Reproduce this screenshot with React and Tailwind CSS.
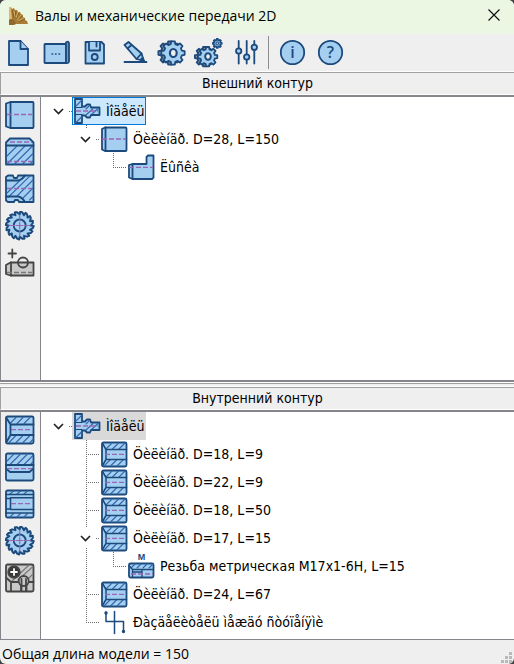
import React, { useState } from 'react';

const BLUE = '#1c4a7c';
const FILL = '#a5cff1';
const PURPLE = '#9868b4';

// Geometry helpers
const gearPath = (cx, cy, outer, inner, teeth) => {
    const step = (Math.PI * 2) / teeth;
    const at = (r, a) => `${(cx + r * Math.cos(a)).toFixed(2)} ${(cy + r * Math.sin(a)).toFixed(2)}`;
    let d = '';
    for (let i = 0; i < teeth; i++) {
        const a = i * step - Math.PI / 2;
        d += `${i ? 'L' : 'M'}${at(inner, a - step * 0.32)}L${at(outer, a - step * 0.2)}L${at(outer, a + step * 0.2)}L${at(inner, a + step * 0.32)}`;
    }
    return d + 'Z';
};

const sawPath = (cx, cy, outer, inner, teeth) => {
    const step = (Math.PI * 2) / teeth;
    const at = (r, a) => `${(cx + r * Math.cos(a)).toFixed(2)} ${(cy + r * Math.sin(a)).toFixed(2)}`;
    let d = '';
    for (let i = 0; i < teeth; i++) {
        const a = i * step - Math.PI / 2;
        d += `${i ? 'L' : 'M'}${at(inner, a)}L${at(outer, a + step * 0.1)}L${at(outer - 0.6, a + step * 0.5)}`;
    }
    return d + 'Z';
};

const Draw = ({ size, children, stroke = BLUE, fill = FILL }) => (
    <svg
        width={size}
        height={size}
        viewBox={`0 0 ${size} ${size}`}
        fill={fill}
        stroke={stroke}
        strokeWidth="1.8"
        strokeLinejoin="round"
        strokeLinecap="round"
        className="shrink-0"
        aria-hidden="true"
    >
        {children}
    </svg>
);

const Axis = ({ y, from = 2, to = 27, color = PURPLE }) => (
    <path d={`M${from} ${y}H${to}`} stroke={color} strokeWidth="1.3" strokeDasharray="5 2" strokeLinecap="butt" />
);

const Hatch = ({ d, color = '#2f68ae' }) => <path d={d} fill="none" stroke={color} strokeWidth="1.1" />;

// Toolbar icons
const NewIcon = () => (
    <Draw size={38}>
        <path d="M9 7H20.5L28 15V31H9Z" />
        <path d="M20.5 7V15H28" />
    </Draw>
);

const OpenIcon = () => (
    <Draw size={38}>
        <path d="M7 10H28V29H7Q6.500 29 6.500 28.500V10.500Z" />
        <path d="M28 8.500Q31 6.500 31 9.500V27Q31 29.500 28 29Z" fill="#6d9cc9" />
        <path d="M14 20h.6M17.500 20h.6M21 20h.6" strokeWidth="1.500" />
    </Draw>
);

const SaveIcon = () => (
    <Draw size={38}>
        <path d="M9.500 8H25.500L28 10.500V29.500H9.500Z" />
        <path d="M13 8V16.500H24V8" />
        <path d="M20.500 8.500V12.500" />
        <circle cx="18.700" cy="23" r="3" />
    </Draw>
);

const EditIcon = () => (
    <Draw size={38}>
        <path d="M10.500 11L14.500 8L27.500 19.500L30 27L22.500 25Z" />
        <path d="M13.500 14.500L17.500 11M22.500 25L27.500 19.500" />
        <path d="M27.500 24.500L30 27L27 26.300Z" fill={BLUE} />
        <path d="M10.500 28H32.500" />
    </Draw>
);

const GearIcon = () => (
    <Draw size={38}>
        <path d={gearPath(18, 19, 11.8, 9.2, 8)} fill="#8b8d92" />
        <path d={gearPath(21, 19, 11.8, 9.2, 8)} />
        <ellipse cx="21.300" cy="19" rx="3.400" ry="4" fill="#efefef" strokeWidth="2.200" />
    </Draw>
);

const GearsIcon = () => (
    <Draw size={38}>
        <path d={gearPath(14.6, 22.7, 9.8, 7.5, 8)} fill="#8b8d92" />
        <path d={gearPath(17.6, 22.7, 9.8, 7.5, 8)} />
        <ellipse cx="18" cy="22.500" rx="2.800" ry="3.300" fill="#efefef" strokeWidth="2" />
        <path d={gearPath(27.3, 9.4, 4.6, 3.4, 8)} fill="#7ca9d6" strokeWidth="1.500" />
        <circle cx="27.300" cy="9.400" r="1.300" strokeWidth="1" />
    </Draw>
);

const SlidersIcon = () => (
    <Draw size={38}>
        <path d="M10.700 7V29.500M18.700 7V29.500M26.300 7V29.500" />
        <circle cx="10.700" cy="17" r="2.700" />
        <circle cx="18.700" cy="23" r="2.700" />
        <circle cx="26.300" cy="13.300" r="2.700" />
    </Draw>
);

const RoundIcon = ({ sign }) => (
    <Draw size={38}>
        <circle cx="19.500" cy="18.500" r="11.700" />
        <text
            x="19.500"
            y="24"
            textAnchor="middle"
            fontFamily="Open Sans, sans-serif"
            fontSize="16"
            fontWeight="600"
            fill={BLUE}
            stroke="none"
        >
            {sign}
        </text>
    </Draw>
);

// Element icons of the side palettes
const CylinderIcon = () => (
    <Draw size={30}>
        <path d="M5.500 2H27.500Q28.500 2 28.500 3V27Q28.500 28 27.500 28H5.500L1 26.500V3.500Z" />
        <path d="M5.500 2V28" />
        <Axis y={14.5} />
    </Draw>
);

const OuterChamferIcon = () => (
    <Draw size={30}>
        <path d="M5 1.500H24.500L28.500 5.500V27.500H1V5.500Z" />
        <Hatch d="M2 19L12 9M2 27L20 9M9.500 27L27.500 9M17.500 27L28 16.500M25 27L28 24" />
        <path d="M1 8.500H28.500" fill="none" />
        <Axis y={5} from={5} />
        <Axis y={24.5} />
    </Draw>
);

const GrooveIcon = () => (
    <Draw size={30}>
        <path d="M1 3L3 1.500H8L9 4H12L13 1.500H28.500V28H22L20 28H14L13 26H10L9 28H3L1 26.500Z" />
        <Hatch d="M2 19L18.500 3M3 23.500L25 1.800M12 22L28 6M18 24L28 14M24.500 26L28 22.500" />
        <path d="M1 6.500H13Q17 6 20 1.500M1 22.500H13Q17 23 20 28" fill="none" />
        <Axis y={14.5} />
    </Draw>
);

const SawGearIcon = () => (
    <Draw size={30}>
        <path d={sawPath(14.7, 14.5, 14, 11.2, 16)} strokeWidth="2" />
        <circle cx="14.700" cy="14.500" r="6" />
        <path d="M4 14.500H25.500M14.700 4V25" stroke={PURPLE} strokeWidth="1.200" strokeDasharray="6 1.500" />
    </Draw>
);

const AddHoleIcon = () => (
    <Draw size={30} stroke="#454545" fill="#c9c9c9">
        <path d="M3.500 5.500H11M7.300 1.500V9.500" />
        <path d="M5.500 14.500H28.500V27.500H5.500L1 26V17Z" />
        <path d="M6 14.500V27.500" />
        <circle cx="18" cy="14.500" r="5" fill="none" />
        <Axis y={24.5} color="#777777" />
    </Draw>
);

const BoreIcon = () => (
    <Draw size={30}>
        <rect x="1" y="1.500" width="27.500" height="27" rx="1.500" />
        <Hatch d="M5 8.500L11 2.500M12 8.500L18 2.500M19 8.500L25 2.500M4 27.500L10.500 21M11 27.500L17.500 21M18 27.500L24.500 21M25 27.500L28 24.500" />
        <path d="M1.500 3L5.500 9.500V20L1.500 27M5.500 9.500H28.500M5.500 20H28.500" fill="none" />
        <Axis y={14.7} from={6} />
    </Draw>
);

const InnerChamferIcon = () => (
    <Draw size={30}>
        <rect x="1" y="1.500" width="27.500" height="27" rx="1.500" />
        <Hatch d="M2 9L9 2M5 12.500L15.500 2M12 12.500L22.500 2M19 12.500L28 3.500M25.500 12.500L28 10" />
        <path d="M1 13H28.500M1.500 17L5 20H24.500L28 17" fill="none" />
        <Axis y={16.7} />
    </Draw>
);

const InnerGrooveIcon = () => (
    <Draw size={30}>
        <rect x="1" y="1.500" width="27.500" height="27" rx="1.500" />
        <Hatch d="M5 5L8.500 2M12 5L15.500 2M19 5L22.500 2M5 28L8.500 24.500M12 28L15.500 24.500M19 28L22.500 24.500" />
        <path d="M1 5.500H28.500M1 24H28.500M28.500 8.800H5.500V20.500H28.500M1.500 9.500H5.500M1.500 20H5.500" fill="none" strokeWidth="1.500" />
        <Axis y={14.7} from={6} />
    </Draw>
);

const AddInnerHoleIcon = () => (
    <Draw size={30} stroke="#454545" fill="#c9c9c9">
        <rect x="1" y="1.500" width="27.500" height="27" rx="1.500" />
        <Hatch color="#777777" d="M6 19L24 2M13 17L28 3.500M22 17L28 11" />
        <path d="M1.500 15L6 19H28.500M6 19V28M16 18V28M21.500 18V28" fill="none" />
        <circle cx="18.700" cy="18" r="5" />
        <path d="M16.500 16V28M21 16V28" fill="none" />
        <circle cx="9" cy="9" r="5.800" fill="#383838" />
        <path d="M6 9H12M9 6V12" stroke="#ffffff" />
    </Draw>
);

// Tree icons
const ShaftIcon = () => (
    <Draw size={28}>
        <path d="M2 2H9V9.500H12L14 7.500H17L18 10.500H26.500V18H18L17 20.500H14L12 18.500H9V26H2Z" />
        <Hatch d="M3 9L8.500 3.500M3 25.500L8.500 20M13 12L16 9M13 18L20 11.500M19 17L25 11.500" />
        <path d="M2 10.500H9M2 17.500H9" fill="none" strokeWidth="1.200" />
        <Axis y={14} from={3} to={25} />
    </Draw>
);

const TreeCylinderIcon = () => (
    <Draw size={28}>
        <path d="M5 2.500H25.500Q26.500 2.500 26.500 3.500V25Q26.500 26 25.500 26H5L2 24.500V4Z" />
        <path d="M5.500 2.500V26" />
        <Axis y={14} to={26} />
    </Draw>
);

const FlatIcon = () => (
    <Draw size={28}>
        <path d="M5.500 11H19.500V4L21 2.500H26.500V24.500L25 26H5.500L2 24.500V12Z" />
        <path d="M5.500 11V26" />
        <Axis y={14.3} to={26} />
    </Draw>
);

const TreeBoreIcon = () => (
    <Draw size={28}>
        <rect x="2" y="2.500" width="24.500" height="24" rx="1.500" />
        <Hatch d="M6 9L12 3M12.500 9L18.500 3M19 9L25 3M4 26L10.500 19.500M10.500 26L17 19.500M17 26L23.500 19.500" />
        <path d="M2.500 3.500L6 9.500V19.500L2.500 25.500M6 9.500H26.500M6 19.500H26.500" fill="none" strokeWidth="1.500" />
        <Axis y={14.3} from={5} to={26} />
    </Draw>
);

const ThreadIcon = () => (
    <Draw size={28}>
        <text
            x="14.500"
            y="8"
            textAnchor="middle"
            fontFamily="Liberation Sans, sans-serif"
            fontSize="9"
            fontWeight="700"
            fill={BLUE}
            stroke="none"
        >
            M
        </text>
        <rect x="2" y="11.500" width="24.500" height="14" rx="1.500" />
        <Hatch d="M4 16L8 12M10 16L14 12M16 16L20 12M22 16L26 12" />
        <path d="M2.500 14L5.500 17.500H26.500M5.500 17.500V25M15 17.500V25M5.500 20H15" fill="none" strokeWidth="1.300" />
        <Axis y={22} from={4} to={26} />
    </Draw>
);

const SeparatorIcon = () => (
    <Draw size={28} fill="none">
        <path d="M6 4V13.500H23.500V24M14.500 3.500V25.500" strokeWidth="1.500" />
        <circle cx="6" cy="5" r="0.800" />
        <circle cx="23.500" cy="23.500" r="0.800" />
    </Draw>
);

const AppIcon = () => (
    <svg width="20" height="20" viewBox="0 0 20 20" className="shrink-0" aria-hidden="true">
        <path d="M1 0L3 0L4 2L6 1L7 3L9 3L10 5L12 5L13 7L15 8L15 10L17 11L17 13L19 14L20 17H8L5 18H1Z" fill="#a97d35" />
        <path d="M1 0L3 0L4 12L1 13Z" fill="#d9b878" />
        <path d="M4 3L6 11M8 4L7 11M11 6L8 12M14 9L9 13M17 12L10 15" stroke="#805721" strokeWidth="0.900" />
        <path d="M6 4L7 10M10 5L8 11M13 8L9 13M16 11L10 14" stroke="#d6b26c" strokeWidth="0.900" />
        <path d="M1 13Q6 10 8 17L5 18H1Z" fill="#8f682c" />
    </svg>
);

const TOOLS = [
    { name: 'Новая модель', icon: NewIcon },
    { name: 'Открыть', icon: OpenIcon },
    { name: 'Сохранить', icon: SaveIcon },
    { name: 'Построить', icon: EditIcon },
    { name: 'Генерация', icon: GearIcon },
    { name: 'Механические передачи', icon: GearsIcon },
    { name: 'Параметры', icon: SlidersIcon },
];

const OUTER_PALETTE = [
    { name: 'Цилиндр', icon: CylinderIcon },
    { name: 'Фаска', icon: OuterChamferIcon },
    { name: 'Канавка', icon: GrooveIcon },
    { name: 'Передача', icon: SawGearIcon },
    { name: 'Добавить отверстие', icon: AddHoleIcon },
];

const INNER_PALETTE = [
    { name: 'Цилиндр', icon: BoreIcon },
    { name: 'Фаска', icon: InnerChamferIcon },
    { name: 'Канавка', icon: InnerGrooveIcon },
    { name: 'Передача', icon: SawGearIcon },
    { name: 'Добавить отверстие', icon: AddInnerHoleIcon },
];

const OUTER_TREE = {
    label: 'Ìîäåëü',
    icon: ShaftIcon,
    children: [
        {
            label: 'Öèëèíäð. D=28, L=150',
            icon: TreeCylinderIcon,
            children: [{ label: 'Ëûñêà', icon: FlatIcon }],
        },
    ],
};

const INNER_TREE = {
    label: 'Ìîäåëü',
    icon: ShaftIcon,
    children: [
        { label: 'Öèëèíäð. D=18, L=9', icon: TreeBoreIcon },
        { label: 'Öèëèíäð. D=22, L=9', icon: TreeBoreIcon },
        { label: 'Öèëèíäð. D=18, L=50', icon: TreeBoreIcon },
        {
            label: 'Öèëèíäð. D=17, L=15',
            icon: TreeBoreIcon,
            children: [{ label: 'Резьба метрическая М17х1-6Н, L=15', icon: ThreadIcon }],
        },
        { label: 'Öèëèíäð. D=24, L=67', icon: TreeBoreIcon },
        { label: 'Ðàçäåëèòåëü ìåæäó ñòóïåíÿìè', icon: SeparatorIcon },
    ],
};

// Dotted connector between a row and its parent
const Guide = ({ d }) => (
    <svg width="27" height="28" viewBox="0 0 27 28" className="shrink-0" fill="none" aria-hidden="true">
        {d && <path d={d} stroke="#6e6e6e" strokeDasharray="1 1" />}
    </svg>
);

const TreeNode = ({ node, lines = [], root, last = true, highlight }) => {
    const [open, setOpen] = useState(true);
    const Icon = node.icon;

    let link = last ? 'M14.5 0V14M14 14.5H27' : 'M14.5 0V28M14 14.5H27';
    if (node.children) {
        link = root ? 'M24 14.5H27' : `M14.5 0V4M24 14.5H27${last ? '' : 'M14.5 24V28'}`;
    }

    return (
        <li>
            <div className="flex h-7">
                {lines.map((on, i) => <Guide key={i} d={on ? 'M14.5 0V28' : ''} />)}
                {node.children ? (
                    <button
                        type="button"
                        aria-label={open ? 'Свернуть' : 'Развернуть'}
                        onClick={() => setOpen(!open)}
                        className="relative shrink-0"
                    >
                        <Guide d={link} />
                        <svg
                            width="11"
                            height="7"
                            viewBox="0 0 11 7"
                            fill="none"
                            stroke="#1f1f1f"
                            strokeWidth="1.600"
                            className={`absolute left-2 top-[11px] ${open ? '' : '-rotate-90'}`}
                        >
                            <path d="M1 1L5.500 5.500L10 1" />
                        </svg>
                    </button>
                ) : <Guide d={link} />}
                <div className={`flex items-center gap-[5px] border pr-px ${highlight || 'border-transparent'}`}>
                    <Icon />
                    <span className="whitespace-nowrap">{node.label}</span>
                </div>
            </div>
            {node.children && open && (
                <ul>
                    {node.children.map((child, i) => (
                        <TreeNode
                            key={child.label}
                            node={child}
                            last={i === node.children.length - 1}
                            lines={root ? [false] : [...lines, !last]}
                        />
                    ))}
                </ul>
            )}
        </li>
    );
};

const Contour = ({ title, palette, tree, highlight, className }) => (
    <section className={`flex flex-col font-['DejaVu_Sans_Condensed','DejaVu_Sans',sans-serif] text-sm ${className}`}>
        <h2 className="h-[23px] shrink-0 border-b border-l border-t border-b-white border-l-[#a0a0a0] border-t-[#a0a0a0] text-center leading-5">
            {title}
        </h2>
        <div className="flex flex-1 border-l border-t-2 border-[#85858b]">
            <div className="flex w-10 shrink-0 flex-col gap-[7px] border-r border-[#85858b] pl-1 pt-[3px]">
                {palette.map(({ name, icon: Icon }) => (
                    <button key={name} type="button" title={name} className="size-[30px]">
                        <Icon />
                    </button>
                ))}
            </div>
            <ul className="flex-1 overflow-hidden bg-white pb-[3px] pl-1">
                <TreeNode node={tree} root highlight={highlight} />
            </ul>
        </div>
    </section>
);

export default function App() {
    return (
        <div className="min-h-screen bg-[#444444] font-['Open_Sans','Noto_Sans',sans-serif] text-black">
            <div className="flex min-h-screen flex-col overflow-hidden rounded-md bg-[#efefef]">
                <header className="flex h-[34px] shrink-0 items-center bg-[#ebf7e3] pl-2 pr-[14px]">
                    <AppIcon />
                    <h1 className="flex-1 pb-0.5 pl-[7px] text-sm">
                        Валы и механические передачи 2D
                    </h1>
                    <button type="button" aria-label="Закрыть" className="pb-1">
                        <svg width="12" height="12" viewBox="0 0 12 12" stroke="#111111" strokeWidth="1.200">
                            <path d="M0.500 0.500L11.500 11.500M11.500 0.500L0.500 11.500" />
                        </svg>
                    </button>
                </header>

                <nav className="flex h-[38px] shrink-0 border-b border-white">
                    {TOOLS.map(({ name, icon: Icon }) => (
                        <button key={name} type="button" title={name} className="w-[38px]">
                            <Icon />
                        </button>
                    ))}
                    <div className="my-0.5 ml-0.5 mr-1 w-px bg-[#8c8c8c]" />
                    <button type="button" title="О программе" className="w-[38px]">
                        <RoundIcon sign="i" />
                    </button>
                    <button type="button" title="Справка" className="w-[38px]">
                        <RoundIcon sign="?" />
                    </button>
                </nav>

                <Contour
                    title="Внешний контур"
                    palette={OUTER_PALETTE}
                    tree={OUTER_TREE}
                    highlight="border-[#0078d7] bg-[#cce8ff]"
                    className="flex-1"
                />
                <div className="h-[7px] shrink-0 border-b border-t-2 border-b-white border-t-[#85858b]">
                    <div className="h-0.5 border-b border-[#a0a0a0] bg-white" />
                </div>
                <Contour
                    title="Внутренний контур"
                    palette={INNER_PALETTE}
                    tree={INNER_TREE}
                    highlight="border-[#d9d9d9] bg-[#d9d9d9]"
                    className="shrink-0"
                />

                <footer className="flex h-[25px] shrink-0 items-center justify-between border-t border-[#85858b] pl-0.5 pr-px text-sm">
                    <span className="pt-1">Общая длина модели = 150</span>
                    <svg width="12" height="12" viewBox="0 0 12 12" fill="#b9b9b9" className="self-end" aria-hidden="true">
                        <path d="M8 0h3v3h-3zM4 4h3v3h-3zM8 4h3v3h-3zM0 8h3v3h-3zM4 8h3v3h-3zM8 8h3v3h-3z" />
                    </svg>
                </footer>
            </div>
        </div>
    );
}
